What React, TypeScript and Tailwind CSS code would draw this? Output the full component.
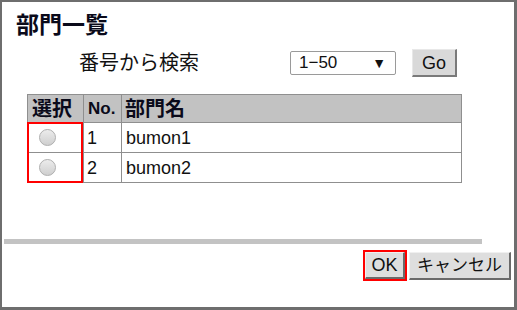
import React from "react";

const font = { fontFamily: '"Liberation Sans", "Noto Sans CJK JP", sans-serif' };

function Radio() {
  return (
    <div className="w-[17px] h-[17px] rounded-full border border-[#b0b0b0] bg-gradient-to-b from-[#ececec] to-[#cfcfcf]" />
  );
}

export default function App() {
  return (
    <div
      className="w-[517px] h-[310px] bg-white border-l-2 border-t-2 border-r-[3px] border-b-[3px] border-[#6e6e6e] flex flex-col text-black"
      style={font}
    >
      <h1 className="pl-[14px] pt-[9px] text-[23px] leading-[28px] font-bold text-[#0a0a1a]">部門一覧</h1>

      <div className="mt-[10px] h-[28px] flex items-center pl-[77px]">
        <span className="w-[211px] text-[20px] leading-[24px] text-[#111]">番号から検索</span>
        <div className="w-[106px] h-[24px] border border-[#9a9a9a] rounded-[2px] bg-white flex items-center justify-between pl-[8px] pr-[9px]">
          <span className="text-[17px] leading-[20px] text-[#111]">1−50</span>
          <span className="text-[14px] leading-[14px] text-[#111]">▼</span>
        </div>
        <div className="ml-[16px] w-[45px] h-[28px] bg-[#d9d9d9] border border-t-[#e8e8e8] border-l-[#e8e8e8] border-r-2 border-b-2 border-r-[#7a7a7a] border-b-[#7a7a7a] flex items-center justify-center">
          <span className="text-[18px] leading-[20px] text-[#111]">Go</span>
        </div>
      </div>

      <div className="relative mt-[17px] ml-[25px] w-[435px]">
        <table className="w-[435px] table-fixed border-collapse border border-[#8f8f8f]">
          <colgroup>
            <col className="w-[56px]" />
            <col className="w-[38px]" />
            <col />
          </colgroup>
          <thead>
            <tr className="h-[28px] bg-[#c2c2c2]">
              <th className="border border-[#8f8f8f] text-left pl-[4px] text-[20px] leading-[24px] font-bold text-[#0a0a1a] p-0">選択</th>
              <th className="border border-[#8f8f8f] text-left pl-[4px] text-[17px] leading-[24px] font-bold text-[#0a0a1a] p-0">No.</th>
              <th className="border border-[#8f8f8f] text-left pl-[3px] text-[20px] leading-[24px] font-bold text-[#0a0a1a] p-0">部門名</th>
            </tr>
          </thead>
          <tbody>
            {[1, 2].map((n) => (
              <tr key={n} className="h-[30px]">
                <td className="border border-[#8f8f8f] pl-[11px] p-0">
                  <Radio />
                </td>
                <td className="border border-[#8f8f8f] pl-[3px] text-[18px] leading-[22px] text-[#111] p-0">{n}</td>
                <td className="border border-[#8f8f8f] pl-[4px] text-[18px] leading-[22px] text-[#111] p-0">bumon{n}</td>
              </tr>
            ))}
          </tbody>
        </table>
        <div className="absolute left-0 top-[28px] w-[56px] h-[61px] border-2 border-[#ff0000]" />
      </div>

      <div className="mt-[56px] ml-[2px] w-[478px] h-[5px] bg-[#c3c3c3]" />

      <div className="mt-[6px] flex justify-end items-start gap-[2px] pr-[3px]">
        <div className="border-2 border-[#ff0000] p-0">
          <div className="w-[40px] h-[27px] bg-[#dedede] border border-t-[#f0f0f0] border-l-[#f0f0f0] border-r-2 border-b-2 border-r-[#6a6a6a] border-b-[#6a6a6a] flex items-center justify-center">
            <span className="text-[18px] leading-[22px] text-[#111]">OK</span>
          </div>
        </div>
        <div className="mt-[2px] w-[102px] h-[28px] bg-[#dedede] border border-t-[#f0f0f0] border-l-[#f0f0f0] border-r-2 border-b-2 border-r-[#6a6a6a] border-b-[#6a6a6a] flex items-center justify-center">
          <span className="text-[17px] leading-[22px] text-[#111]">キャンセル</span>
        </div>
      </div>
    </div>
  );
}
